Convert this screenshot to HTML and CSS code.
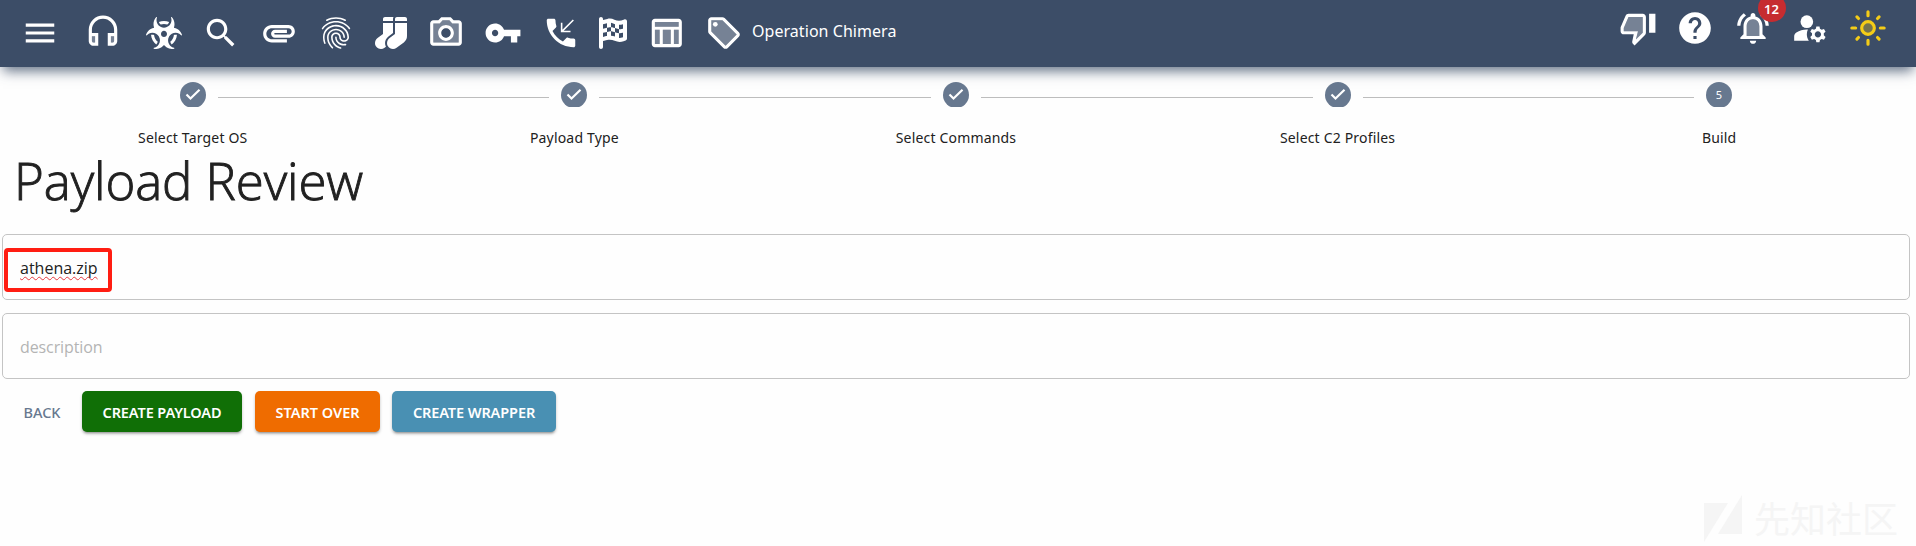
FILE: index.html
```html
<!DOCTYPE html>
<html lang="en">
<head>
<meta charset="utf-8">
<title>Payload Review</title>
<link rel="stylesheet" href="styles.css">
</head>
<body>
<header class="topbar">
  <nav class="tools">
    <svg class="icon menu" viewBox="0 0 24 24"><path d="M3 18h18v-2H3v2zm0-5h18v-2H3v2zm0-7v2h18V6H3z"/></svg>
    <svg class="icon headset" viewBox="0 0 24 24"><path opacity=".3" d="M5 14v3c0 .55.45 1 1 1h1v-4zM17 14h2v3c0 .55-.45 1-1 1h-1z"/><path d="M12 1a9 9 0 0 0-9 9v7c0 1.66 1.34 3 3 3h3v-8H5v-2c0-3.87 3.13-7 7-7s7 3.13 7 7v2h-4v8h3c1.66 0 3-1.34 3-3v-7a9 9 0 0 0-9-9zM7 14v4H6c-.55 0-1-.45-1-1v-3h2zm12 3c0 .55-.45 1-1 1h-1v-4h2v3z"/></svg>
    <svg class="icon biohazard" viewBox="0 0 576 512"><path d="M287.9 112c18.6 0 36.2 3.8 52.8 9.6 13.3-10.3 23.6-24.3 29.5-40.7-25.2-10.9-53-17-82.2-17-29.1 0-56.9 6-82.1 16.9 5.9 16.4 16.2 30.4 29.5 40.7 16.5-5.7 34-9.5 52.5-9.5zM163.6 438.7c12-11.8 20.4-26.4 24.5-42.4-32.9-26.4-54.8-65.3-58.9-109.6-8.5-2.8-17.2-4.6-26.4-4.6-7.6 0-15.2 1-22.5 3.1 4.1 62.8 35.8 118 83.3 153.5zm224.2-42.6c4.1 16 12.5 30.7 24.5 42.5 47.4-35.5 79.1-90.7 83-153.5-7.2-2-14.7-3-22.2-3-9.2 0-18 1.9-26.6 4.7-4.1 44.2-26 82.9-58.7 109.3zm113.5-205c-17.6-10.4-36.3-16.6-55.3-19.9 6-17.7 10-36.4 10-56.2 0-41-14.5-80.8-41-112.2-2.5-3-6.6-3.7-10-1.8-3.3 1.9-4.8 6-3.6 9.7 4.5 13.8 6.6 26.3 6.6 38.5 0 67.8-53.8 122.9-120 122.9S168 117 168 49.2c0-12.1 2.2-24.7 6.6-38.5 1.2-3.7-.3-7.8-3.6-9.7-3.4-1.9-7.5-1.2-10 1.8C134.6 34.2 120 74 120 115c0 19.8 3.9 38.5 10 56.2-18.9 3.3-37.7 9.5-55.3 19.9-34.6 20.5-61 53.3-74.3 92.4-1.3 3.7.2 7.7 3.5 9.8 3.3 2 7.5 1.3 10-1.6 9.4-10.8 19-19.1 29.2-25.1 57.3-33.9 130.8-13.7 163.9 45 33.1 58.7 13.4 134-43.9 167.9-10.2 6.1-22 10.4-35.8 13.4-3.7.8-6.4 4.2-6.4 8.1.1 4 2.7 7.3 6.5 8 39.7 7.8 80.6.8 115.2-19.7 18-10.6 32.9-24.5 45.3-40.1 12.4 15.6 27.3 29.5 45.3 40.1 34.6 20.5 75.5 27.5 115.2 19.7 3.8-.7 6.4-4 6.5-8 0-3.9-2.6-7.3-6.4-8.1-13.9-2.9-25.6-7.3-35.8-13.4-57.3-33.9-77-109.2-43.9-167.9s106.6-78.9 163.9-45c10.2 6.1 19.8 14.3 29.2 25.1 2.5 2.9 6.7 3.6 10 1.6s4.8-6.1 3.5-9.8c-13.1-39.1-39.5-72-74.1-92.4zm-213.4 129c-26.5 0-48-22-48-49.1s21.5-49.1 48-49.1 48 22 48 49.1-21.5 49.1-48 49.1z"/></svg>
    <svg class="icon search" viewBox="0 0 24 24"><path d="M15.5 14h-.79l-.28-.27C15.41 12.59 16 11.11 16 9.5 16 5.91 13.09 3 9.5 3S3 5.91 3 9.5 5.91 16 9.5 16c1.61 0 3.09-.59 4.23-1.57l.27.28v.79l5 4.99L20.49 19l-4.99-5zm-6 0C7.01 14 5 11.99 5 9.5S7.01 5 9.5 5 14 7.01 14 9.5 11.99 14 9.5 14z"/></svg>
    <svg class="icon clip" viewBox="0 0 24 24"><path d="M2 12.5C2 9.46 4.46 7 7.5 7H18c2.21 0 4 1.79 4 4s-1.79 4-4 4H9.5C8.12 15 7 13.88 7 12.5S8.12 10 9.5 10H17v2H9.41c-.55 0-.55 1 0 1H18c1.1 0 2-.9 2-2s-.9-2-2-2H7.5C5.57 9 4 10.57 4 12.5S5.57 16 7.5 16H17v2H7.5C4.46 18 2 15.54 2 12.5z"/></svg>
    <svg class="icon finger" viewBox="0 0 24 24"><path d="M17.81 4.47c-.08 0-.16-.02-.23-.06C15.66 3.42 14 3 12.01 3c-1.98 0-3.86.47-5.57 1.41-.24.13-.54.04-.68-.2-.13-.24-.04-.55.2-.68C7.82 2.52 9.86 2 12.01 2c2.13 0 3.99.47 6.03 1.52.25.13.34.43.21.67-.09.18-.26.28-.44.28zM3.5 9.72c-.1 0-.2-.03-.29-.09-.23-.16-.28-.47-.12-.7.99-1.4 2.25-2.5 3.75-3.27C9.98 4.04 14 4.03 17.15 5.65c1.5.77 2.76 1.86 3.75 3.25.16.22.11.54-.12.7-.23.16-.54.11-.7-.12-.9-1.26-2.04-2.25-3.39-2.94-2.87-1.47-6.54-1.47-9.4.01-1.36.7-2.5 1.7-3.4 2.96-.08.14-.23.21-.39.21zm6.25 12.07c-.13 0-.26-.05-.35-.15-.87-.87-1.34-1.43-2.01-2.64-.69-1.23-1.05-2.73-1.05-4.34 0-2.97 2.54-5.39 5.66-5.39s5.66 2.42 5.66 5.39c0 .28-.22.5-.5.5s-.5-.22-.5-.5c0-2.42-2.09-4.39-4.66-4.39-2.57 0-4.66 1.97-4.66 4.39 0 1.44.32 2.77.93 3.85.64 1.15 1.08 1.64 1.85 2.42.19.2.19.51 0 .71-.11.1-.24.15-.37.15zm7.17-1.85c-1.19 0-2.24-.3-3.1-.89-1.49-1.01-2.38-2.65-2.38-4.39 0-.28.22-.5.5-.5s.5.22.5.5c0 1.41.72 2.74 1.94 3.56.71.48 1.54.71 2.54.71.24 0 .64-.03 1.04-.1.27-.05.53.13.58.41.05.27-.13.53-.41.58-.57.11-1.07.12-1.21.12zM14.91 22c-.04 0-.09-.01-.13-.02-1.59-.44-2.63-1.03-3.72-2.1-1.4-1.39-2.17-3.24-2.17-5.22 0-1.62 1.38-2.94 3.08-2.94 1.7 0 3.08 1.32 3.08 2.94 0 1.07.93 1.94 2.08 1.94s2.08-.87 2.08-1.94c0-3.77-3.25-6.83-7.25-6.83-2.84 0-5.44 1.58-6.61 4.03-.39.81-.59 1.76-.59 2.8 0 .78.07 2.01.67 3.61.1.26-.03.55-.29.64-.26.1-.55-.04-.64-.29-.49-1.31-.73-2.61-.73-3.96 0-1.2.23-2.29.68-3.24 1.33-2.79 4.28-4.6 7.51-4.6 4.55 0 8.25 3.51 8.25 7.83 0 1.62-1.38 2.94-3.08 2.94s-3.08-1.32-3.08-2.94c0-1.07-.93-1.94-2.08-1.94s-2.08.87-2.08 1.94c0 1.71.66 3.31 1.87 4.51.95.94 1.86 1.46 3.27 1.85.27.07.42.35.35.61-.05.23-.26.38-.47.38z"/></svg>
    <svg class="icon socks" viewBox="0 0 512 512"><path d="M214.66 311.01L288 256V96H128v176l-86.65 64.61c-39.4 29.56-53.86 84.42-29.21 127.06C30.39 495.25 63.27 512 96.08 512c20.03 0 40.25-6.25 57.52-19.2l21.86-16.39c-29.85-55.38-13.54-125.84 39.2-165.4zM288 32c0-11.05 3.07-21.3 8.02-30.38C293.4.92 290.85 0 288 0H160c-17.67 0-32 14.33-32 32v32h160V32zM480 0H352c-17.67 0-32 14.33-32 32v32h192V32c0-17.67-14.33-32-32-32zM320 272l-86.13 64.61c-39.4 29.56-53.86 84.42-29.21 127.06 18.25 31.58 50.61 48.33 83.42 48.33 20.03 0 40.25-6.25 57.52-19.2l115.2-86.4A127.997 127.997 0 0 0 512 304V96H320v176z"/></svg>
    <svg class="icon camera" viewBox="0 0 24 24"><path opacity=".3" fill-rule="evenodd" d="M15.95 6l-1.83-2H9.88L8.05 6H4v12h16V6h-4.05zM12 17c-2.76 0-5-2.24-5-5s2.24-5 5-5 5 2.24 5 5-2.24 5-5 5z"/><path d="M20 4h-3.17L15 2H9L7.17 4H4c-1.1 0-2 .9-2 2v12c0 1.1.9 2 2 2h16c1.1 0 2-.9 2-2V6c0-1.1-.9-2-2-2zm0 14H4V6h4.05l1.83-2h4.24l1.83 2H20v12zM12 7c-2.76 0-5 2.24-5 5s2.24 5 5 5 5-2.24 5-5-2.24-5-5-5zm0 8c-1.65 0-3-1.35-3-3s1.35-3 3-3 3 1.35 3 3-1.35 3-3 3z"/></svg>
    <svg class="icon key" viewBox="0 0 24 24"><path d="M12.65 10C11.83 7.67 9.61 6 7 6c-3.31 0-6 2.69-6 6s2.69 6 6 6c2.61 0 4.83-1.67 5.65-4H17v4h4v-4h2v-4H12.65zM7 14c-1.1 0-2-.9-2-2s.9-2 2-2 2 .9 2 2-.9 2-2 2z"/></svg>
    <svg class="icon phone" viewBox="0 0 24 24"><path d="M20 15.5c-1.25 0-2.45-.2-3.57-.57-.1-.03-.21-.05-.31-.05-.26 0-.51.1-.71.29l-2.2 2.2c-2.83-1.44-5.15-3.75-6.59-6.59l2.2-2.2c.28-.26.36-.65.25-1C8.7 6.45 8.5 5.25 8.5 4c0-.55-.45-1-1-1H4c-.55 0-1 .45-1 1 0 9.39 7.61 17 17 17 .55 0 1-.45 1-1v-3.5c0-.55-.45-1-1-1z"/><path fill="none" stroke="#fff" d="M19.8 3.8l-7.2 7.2M12.4 5.5v5.6H18"/></svg>
    <svg class="icon flag" viewBox="0 0 448 512"><path fill-rule="evenodd" d="M32 0C49.7 0 64 14.3 64 32V48l69-17.2c38.1-9.5 78.3-5.1 113.5 12.5c46.3 23.2 100.8 23.2 147.1 0l9.6-4.8C423.8 28.1 448 43.1 448 66.1V345.8c0 13.3-8.3 25.3-20.8 30l-34.7 13c-46.2 17.3-97.6 14.6-141.7-7.4c-37.9-19-81.3-23.7-122.5-13.4L64 384v96c0 17.7-14.3 32-32 32s-32-14.3-32-32V32C0 14.3 14.3 0 32 0zM64 187.1l64-13.9v65.5L64 252.6V318l48.8-12.2c5.1-1.3 10.1-2.4 15.2-3.3V238.7l38.9-8.4c8.3-1.8 16.7-2.5 25.1-2.1v-64c13.6 .4 27.2 2.6 40.4 6.4l23.6 6.9v66.7l-41.7-12.3c-7.3-2.1-14.8-3.4-22.3-3.8v71.4c21.8 1.9 43.3 6.7 64 14.4V244.2l22.7 6.7c13.5 4 27.3 6.4 41.3 7.4V194c-7.8-.8-15.6-2.3-23.2-4.5l-40.8-12v-62c-13-3.8-25.8-8.8-38.2-15c-8.2-4.1-16.9-7-25.8-8.8v72.4c-13-.4-26 .8-38.7 3.6L128 173.2V98L64 114v73.1zM320 335.7c16.8 1.5 33.9-.7 50-6.8l14-5.2V251.9l-7.9 1.8c-18.4 4.3-37.3 5.7-56.1 4.5v77.4zm64-149.4V115.4c-20.9 6.1-42.4 9.1-64 9.1V194c13.9 1.4 28 .5 41.7-2.6l22.3-5.2z"/></svg>
    <svg class="icon table" viewBox="0 0 24 24"><path opacity=".3" d="M5 5h15v3H5zM5 10h3v9H5zM10 10h5v9h-5zM17 10h3v9h-3z"/><path d="M20 3H5c-1.1 0-2 .9-2 2v14c0 1.1.9 2 2 2h15c1.1 0 2-.9 2-2V5c0-1.1-.9-2-2-2zm0 2v3H5V5h15zm-5 14h-5v-9h5v9zM5 10h3v9H5v-9zm12 9v-9h3v9h-3z"/></svg>
    <svg class="icon tag" viewBox="0 0 24 24"><path opacity=".3" d="M11 4H4v7l9 9.01L20 13l-9-9z"/><path d="M21.41 11.58l-9-9C12.05 2.22 11.55 2 11 2H4c-1.1 0-2 .9-2 2v7c0 .55.22 1.05.59 1.42l9 9c.36.36.86.58 1.41.58s1.05-.22 1.41-.59l7-7c.37-.36.59-.86.59-1.41s-.23-1.06-.59-1.42zM13 20.01L4 11V4h7v-.01l9 9-7 7.02z"/><circle cx="6.5" cy="6.5" r="1.5"/></svg>
    <span class="operation">Operation Chimera</span>
  </nav>
  <div class="account">
    <svg class="icon" viewBox="0 0 24 24"><path opacity=".3" d="M3 12v2h9l-1.34 5.34L15 15V5H6z"/><path d="M15 3H6c-.83 0-1.54.5-1.84 1.22l-3.02 7.05c-.09.23-.14.47-.14.73v2c0 1.1.9 2 2 2h6.31l-.95 4.57-.03.32c0 .41.17.79.44 1.06L9.83 23l6.59-6.59c.36-.36.58-.86.58-1.41V5c0-1.1-.9-2-2-2zm0 12l-4.34 4.34L12 14H3v-2l3-7h9v10zm4-12h4v12h-4z"/></svg>
    <svg class="icon" viewBox="0 0 24 24"><path d="M12 2C6.48 2 2 6.48 2 12s4.48 10 10 10 10-4.48 10-10S17.52 2 12 2zm1 17h-2v-2h2v2zm2.07-7.75l-.9.92C13.45 12.9 13 13.5 13 15h-2v-.5c0-1.1.45-2.1 1.17-2.83l1.24-1.26c.37-.36.59-.86.59-1.41 0-1.1-.9-2-2-2s-2 .9-2 2H8c0-2.21 1.79-4 4-4s4 1.79 4 4c0 .88-.36 1.68-.93 2.25z"/></svg>
    <span class="alerts">
      <svg class="icon" viewBox="0 0 24 24"><path opacity=".3" d="M12 6.5c-2.49 0-4 2.02-4 4.5v6h8v-6c0-2.48-1.51-4.5-4-4.5z"/><path d="M12 22c1.1 0 2-.9 2-2h-4c0 1.1.9 2 2 2zm6-6v-5c0-3.07-1.63-5.64-4.5-6.32V4c0-.83-.67-1.5-1.5-1.5s-1.5.67-1.5 1.5v.68C7.64 5.36 6 7.92 6 11v5l-2 2v1h16v-1l-2-2zm-2 1H8v-6c0-2.48 1.51-4.5 4-4.5s4 2.02 4 4.5v6zM7.58 4.08L6.15 2.65C3.75 4.48 2.17 7.3 2.03 10.5h2c.15-2.65 1.51-4.97 3.55-6.42zm12.39 6.42h2c-.15-3.2-1.73-6.02-4.12-7.85l-1.42 1.43c2.02 1.45 3.39 3.77 3.54 6.42z"/></svg>
      <span class="badge">12</span>
    </span>
    <svg class="icon" viewBox="0 0 24 24"><circle cx="10" cy="8" r="4"/><path d="M10.67 13.02C10.45 13.01 10.23 13 10 13c-2.42 0-4.68.67-6.61 1.82-.88.52-1.39 1.5-1.39 2.53V20h9.26c-.79-1.13-1.26-2.51-1.26-4 0-1.07.25-2.07.67-2.98zM20.75 16c0-.22-.03-.42-.06-.63l1.14-1.01-1-1.73-1.45.49c-.32-.27-.68-.48-1.08-.63L18 11h-2l-.3 1.49c-.4.15-.76.36-1.08.63l-1.45-.49-1 1.73 1.14 1.01c-.03.21-.06.41-.06.63s.03.42.06.63l-1.14 1.01 1 1.73 1.45-.49c.32.27.68.48 1.08.63L16 21h2l.3-1.49c.4-.15.76-.36 1.08-.63l1.45.49 1-1.73-1.14-1.01c.03-.21.06-.41.06-.63zM17 18c-1.1 0-2-.9-2-2s.9-2 2-2 2 .9 2 2-.9 2-2 2z"/></svg>
    <svg class="icon sun" viewBox="0 0 24 24"><circle class="sun-core" cx="12" cy="12" r="4"/><path d="M12 1.8v2.4M12 19.8v2.4M1.8 12h2.4M19.8 12h2.4M5 5l1 1M18 18l1 1M5 19l1-1M18 6l1-1"/></svg>
  </div>
</header>

<main>
  <ol class="stepper">
    <li class="step"><svg class="dot" viewBox="0 0 26 25"><circle cx="13" cy="13" r="13"/><path d="M6.5 12.5l4 4 9-8.8"/></svg><span>Select Target OS</span></li>
    <li class="step"><svg class="dot" viewBox="0 0 26 25"><circle cx="13" cy="13" r="13"/><path d="M6.5 12.5l4 4 9-8.8"/></svg><span>Payload Type</span></li>
    <li class="step"><svg class="dot" viewBox="0 0 26 25"><circle cx="13" cy="13" r="13"/><path d="M6.5 12.5l4 4 9-8.8"/></svg><span>Select Commands</span></li>
    <li class="step"><svg class="dot" viewBox="0 0 26 25"><circle cx="13" cy="13" r="13"/><path d="M6.5 12.5l4 4 9-8.8"/></svg><span>Select C2 Profiles</span></li>
    <li class="step"><svg class="dot" viewBox="0 0 26 25"><circle cx="13" cy="13" r="13"/><text x="13" y="17">5</text></svg><span>Build</span></li>
  </ol>
  <h1 class="title">Payload Review</h1>
  <div class="field"><span class="filename">athena.zip</span><span class="highlight"></span></div>
  <div class="field placeholder">description</div>
  <div class="actions">
    <button class="btn back">BACK</button>
    <button class="btn create">CREATE PAYLOAD</button>
    <button class="btn restart">START OVER</button>
    <button class="btn wrapper">CREATE WRAPPER</button>
  </div>
</main>
<div class="watermark">
  <svg viewBox="0 0 38 48"><path d="M0 8h24L0 47zM38 0v39H14z"/></svg>
  <span>先知社区</span>
</div>
</body>
</html>
```
FILE: styles.css
```css
* { box-sizing: border-box; }
body {
  margin: 0;
  height: 546px;
  overflow: hidden;
  position: relative;
  background: #fefefe;
  color: #212121;
  font-family: "Noto Sans", "Open Sans", sans-serif;
}
.topbar {
  display: flex;
  justify-content: space-between;
  height: 67px;
  background: #3c4d67;
  box-shadow: 0 7px 12px -3px rgba(60, 77, 103, 0.8);
  color: #fff;
}
.tools { display: flex; align-items: center; height: 65px; padding-left: 20.5px; }
.icon { display: block; flex: none; width: 38px; height: 38px; fill: #fff; }
.headset { margin-left: 25px; }
.biohazard { width: 36px; height: 32px; margin-left: 24.5px; }
.search { margin-left: 20px; }
.clip { margin-left: 20px; }
.finger { margin-left: 19px; }
.socks { width: 32px; height: 32px; margin-left: 20px; }
.camera { margin-left: 20px; }
.key { margin-left: 19px; }
.phone { margin-left: 20px; }
.flag { width: 28px; height: 32px; margin-left: 19px; }
.table { margin-left: 20px; }
.tag { margin-left: 20px; }
.operation { margin-left: 9px; padding-bottom: 4px; font-size: 16px; line-height: 24px; letter-spacing: 0.05px; }
.account { display: flex; gap: 19.5px; padding: 9px 29.5px 0 0; }
.alerts { position: relative; }
.badge {
  position: absolute;
  top: -15px;
  left: 24px;
  width: 28px;
  height: 28px;
  border-radius: 50%;
  background: #c62c30;
  font-size: 13px;
  font-weight: 600;
  line-height: 30px;
  text-align: center;
}
.sun { fill: none; stroke: #f4cc17; stroke-width: 2; stroke-linecap: round; }
.sun-core { fill: rgba(244, 204, 23, 0.3); }

.stepper { display: flex; width: 1908px; margin: 0 0 0 2px; padding: 15px 0 0; list-style: none; }
.step {
  position: relative;
  flex: 1;
  display: flex;
  flex-direction: column;
  align-items: center;
  gap: 20px;
  font-size: 14px;
  letter-spacing: 0.18px;
  line-height: 22px;
}
.step + .step::before {
  content: "";
  position: absolute;
  top: 15px;
  left: calc(-50% + 25px);
  right: calc(50% + 25px);
  height: 1px;
  background: #bdbdbd;
}
.dot { width: 26px; height: 25px; fill: #67788f; }
.dot path { fill: none; stroke: #fff; stroke-width: 2.2; }
.dot text { fill: #fff; font-size: 11px; text-anchor: middle; }
.title {
  margin: -2px 0 20px 14px;
  height: 67px;
  font-family: "Open Sans", "Noto Sans", sans-serif;
  font-size: 51px;
  font-weight: 300;
  line-height: 67px;
  letter-spacing: -0.1px;
  white-space: nowrap;
  -webkit-text-stroke: 0.9px #212121;
}
.field {
  position: relative;
  display: flex;
  align-items: center;
  width: 1908px;
  height: 66px;
  margin: 0 0 13px 2px;
  padding: 2px 17px 0;
  border: 1px solid #c4c4c4;
  border-radius: 5px;
  font-family: "Open Sans", "Noto Sans", sans-serif;
  font-size: 16px;
  line-height: 24px;
}
.filename { text-decoration: underline wavy #e5393f 1px; text-underline-offset: 2px; text-decoration-skip-ink: none; }
.highlight {
  position: absolute;
  top: 13px;
  left: 1px;
  width: 108px;
  height: 44px;
  border: 4px solid #ff1d12;
  border-radius: 4px;
}
.placeholder { color: #b4b4b4; letter-spacing: -0.1px; margin-bottom: 12px; }
.actions { display: flex; padding-left: 12px; }
.btn {
  height: 41px;
  padding: 0;
  border: 0;
  border-radius: 5px;
  color: #fff;
  font-family: "Noto Sans", "Open Sans", sans-serif;
  font-size: 14.5px;
  font-weight: 600;
  box-shadow: 0 3px 2px -2px rgba(0, 0, 0, 0.2), 0 2px 3px rgba(0, 0, 0, 0.25);
}
.create, .wrapper { letter-spacing: -0.1px; }
.back { width: 60px; margin-right: 10px; background: none; color: #67788f; font-weight: 500; box-shadow: none; }
.create { width: 160px; margin-right: 13px; background: #106f06; }
.restart { width: 125px; margin-right: 12px; background: #ef6c00; }
.wrapper { width: 164px; background: #4990b3; }
.watermark {
  position: absolute;
  right: 18px;
  bottom: 3px;
  display: flex;
  gap: 12px;
  color: #f5f5f5;
  font: 400 36px/44px "Noto Sans CJK SC", sans-serif;
}
.watermark svg { width: 38px; height: 48px; fill: #f5f5f5; }
```
